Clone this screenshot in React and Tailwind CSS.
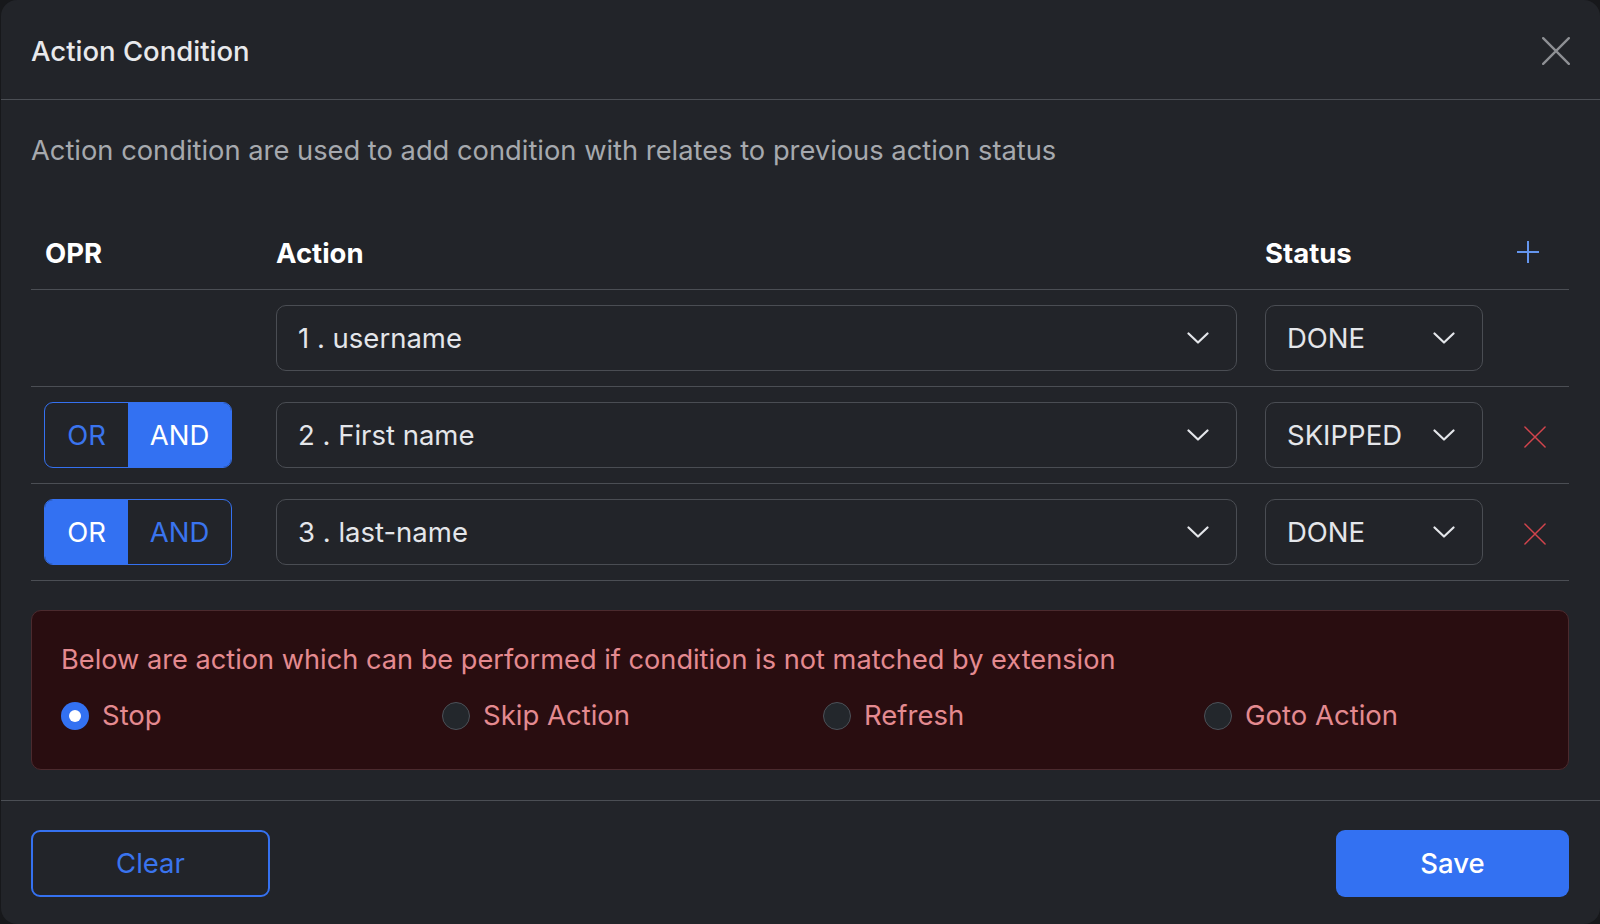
import { useState } from 'react';

const rows = [
  { id: 1, opr: null, action: '1 . username', status: 'DONE' },
  { id: 2, opr: 'AND', action: '2 . First name', status: 'SKIPPED' },
  { id: 3, opr: 'OR', action: '3 . last-name', status: 'DONE' },
];

const fallbacks = ['Stop', 'Skip Action', 'Refresh', 'Goto Action'];

const Chevron = () => (
  <svg width="22" height="12" viewBox="0 0 22 12" fill="none" className="shrink-0">
    <polyline points="1.5,1.5 11,10.5 20.5,1.5" stroke="#e4e6ea" strokeWidth="2.2" strokeLinecap="round" strokeLinejoin="round" />
  </svg>
);

const Cross = ({ size, color, width }) => (
  <svg width={size} height={size} viewBox="0 0 24 24" fill="none">
    <path d="M1 1 23 23M23 1 1 23" stroke={color} strokeWidth={width} strokeLinecap="round" />
  </svg>
);

const Select = ({ value }) => (
  <div className="flex h-[66px] items-center justify-between rounded-[10px] border border-[#4a4d53] pl-[21px] pr-[27px] text-[27.5px] text-[#e4e6ea]">
    <span className="pt-[2px]">{value}</span>
    <Chevron />
  </div>
);

const Toggle = ({ value }) => (
  <div className="flex h-[66px] w-[188px] overflow-hidden rounded-[9px] border border-[#3571f0] pt-[2px] text-[27.5px]">
    <div className={`-mt-[2px] flex w-[83px] items-center justify-center pt-[2px] ${value === 'OR' ? 'bg-[#3371f2] text-white' : 'text-[#3a74ee]'}`}>OR</div>
    <div className={`-mt-[2px] flex flex-1 items-center justify-center pt-[2px] ${value === 'AND' ? 'bg-[#3371f2] text-white' : 'text-[#3a74ee]'}`}>AND</div>
  </div>
);

export default function App() {
  const [choice, setChoice] = useState('Stop');

  return (
    <div className="min-h-screen bg-[#17181b] font-['Inter','Noto_Sans',sans-serif]">
      <div className="ml-px flex h-[924px] w-[1599px] flex-col overflow-hidden rounded-[16px] bg-[#222429]">
        <div className="flex h-[100px] shrink-0 items-center justify-between border-b border-[#4b4e54] pl-[30px] pr-[30px]">
          <h1 className="pt-[4px] text-[27.5px] font-medium text-[#e8e9ec]">Action Condition</h1>
          <button className="mt-[2px]">
            <Cross size={28} color="#8e9094" width={2} />
          </button>
        </div>

        <div className="flex flex-1 flex-col pl-[30px] pr-[31px] pt-[31px]">
          <p className="h-[40px] leading-[40px] text-[27.3px] text-[#a6a9ae]">
            Action condition are used to add condition with relates to previous action status
          </p>

          <div className="mt-[47px]">
            <div className="grid h-[72px] grid-cols-[231px_989px_246px_72px] items-center border-b border-[#4b4e54] text-[27.5px] font-bold text-white">
              <div className="px-[14px]">OPR</div>
              <div className="px-[14px]">Action</div>
              <div className="px-[14px]">Status</div>
              <div className="flex justify-center pr-[10px] pb-[4px]">
                <svg width="22" height="22" viewBox="0 0 22 22" fill="none">
                  <path d="M11 0v22M0 11h22" stroke="#6495ed" strokeWidth="2" />
                </svg>
              </div>
            </div>

            {rows.map((row) => (
              <div key={row.id} className="grid h-[97px] grid-cols-[231px_989px_246px_72px] items-center border-b border-[#4b4e54]">
                <div className="px-[13px]">{row.opr && <Toggle value={row.opr} />}</div>
                <div className="px-[14px]">
                  <Select value={row.action} />
                </div>
                <div className="px-[14px]">
                  <Select value={row.status} />
                </div>
                <div className="flex justify-center pl-[3px] pt-[4px]">
                  {row.opr && <Cross size={22} color="#d2444c" width={1.6} />}
                </div>
              </div>
            ))}
          </div>

          <div className="mt-[29px] h-[160px] rounded-[10px] border border-[#4b2a2e] bg-[#290d10] pl-[29px] pt-[29px]">
            <p className="h-[40px] leading-[40px] text-[27.2px] text-[#e48a90]">
              Below are action which can be performed if condition is not matched by extension
            </p>
            <div className="mt-[16px] flex">
              {fallbacks.map((f) => (
                <label key={f} className="flex h-[40px] w-[381px] shrink-0 cursor-pointer items-center" onClick={() => setChoice(f)}>
                  {choice === f ? (
                    <span className="flex h-[28px] w-[28px] items-center justify-center rounded-full bg-[#3371f2]">
                      <span className="h-[12px] w-[12px] rounded-full bg-white" />
                    </span>
                  ) : (
                    <span className="h-[28px] w-[28px] rounded-full border-[1.5px] border-[#4c5158] bg-[#23272c]" />
                  )}
                  <span className="ml-[13px] text-[27.5px] text-[#e48a90]">{f}</span>
                </label>
              ))}
            </div>
          </div>
        </div>

        <div className="mt-[30px] flex h-[124px] shrink-0 items-start justify-between border-t border-[#4b4e54] pl-[30px] pr-[31px] pt-[29px]">
          <button className="h-[67px] w-[239px] rounded-[9px] border-2 border-[#3571f0] pt-[1px] text-[27.5px] text-[#3a74ee]">Clear</button>
          <button className="h-[67px] w-[233px] rounded-[9px] bg-[#3371f2] pt-[1px] text-[27.5px] font-medium text-white">Save</button>
        </div>
      </div>
    </div>
  );
}
